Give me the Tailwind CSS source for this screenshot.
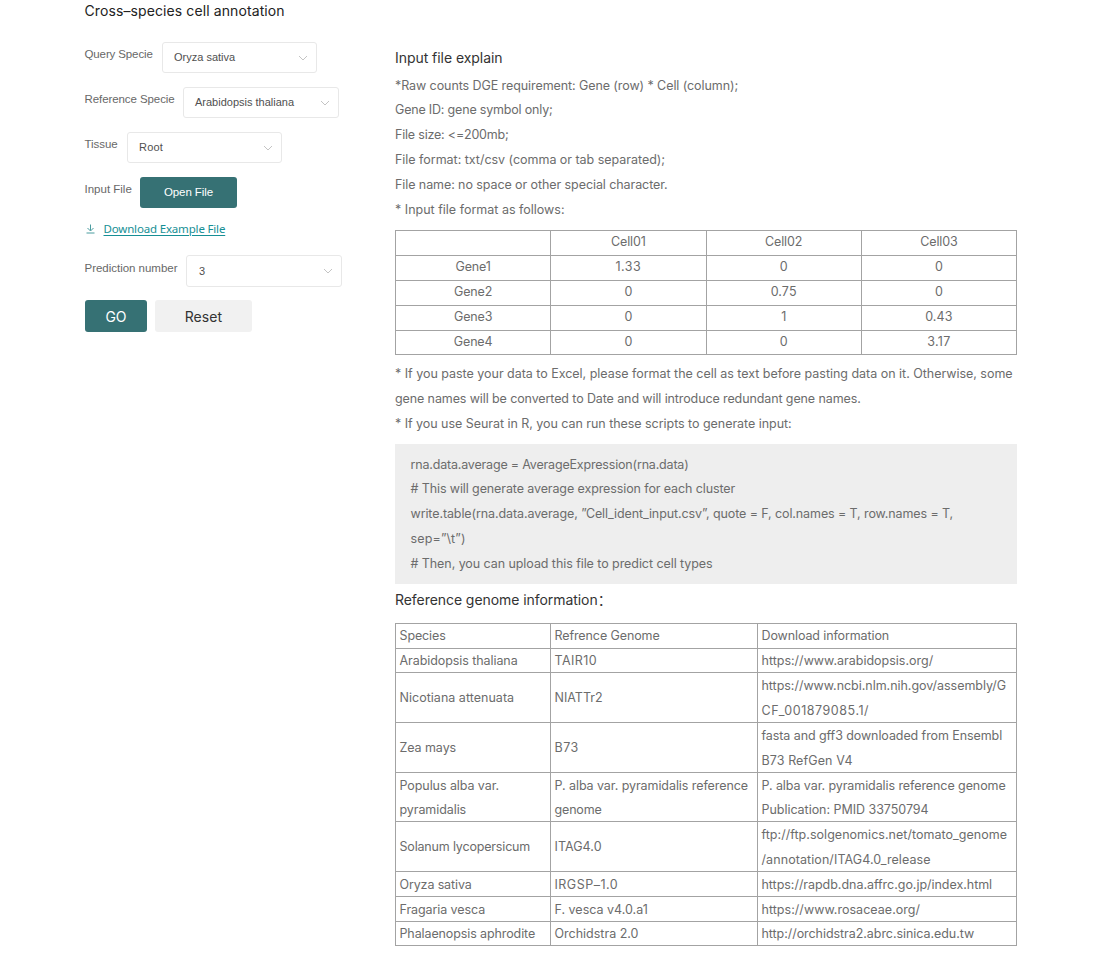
<!DOCTYPE html>
<html lang="en">
<head>
<meta charset="utf-8">
<title>Cross-species cell annotation</title>
<script src="https://cdn.jsdelivr.net/npm/@tailwindcss/browser@4"></script>
</head>
<body class="bg-white font-['Inter','Noto_Sans_CJK_SC',sans-serif] text-[#6c6c6c]">
<main class="flex h-[954px] w-[1100px] overflow-hidden pl-[84.5px] whitespace-nowrap">

  <!-- Query form -->
  <form class="w-[310.5px] shrink-0 pt-px font-['Liberation_Sans',sans-serif] text-[11.5px] text-[#686868]">
    <h1 class="h-[41px] font-['Inter',sans-serif] text-[14px] leading-[20px] tracking-[0.1px] text-[#222]">Cross–species cell annotation</h1>

    <div class="flex h-[45px]">
      <label class="w-[77.5px] leading-[25px] tracking-[-0.12px]">Query Specie</label>
      <div class="flex h-[31px] w-[155px] items-center justify-between rounded-[3px] border border-[#e8e8e8] pr-[8px] pl-[11px] text-[11px] text-[#505050]">
        <span>Oryza sativa</span>
        <svg class="h-[6px] w-[10px]" viewBox="0 0 10 6" fill="none" stroke="#c4c4c4" stroke-width="1"><path d="M1 1l4 4 4-4"/></svg>
      </div>
    </div>

    <div class="flex h-[45px]">
      <label class="w-[98.5px] leading-[25px] tracking-[-0.08px]">Reference Specie</label>
      <div class="flex h-[31px] w-[156px] items-center justify-between rounded-[3px] border border-[#e8e8e8] pr-[8px] pl-[11px] text-[11px] text-[#505050]">
        <span>Arabidopsis thaliana</span>
        <svg class="h-[6px] w-[10px]" viewBox="0 0 10 6" fill="none" stroke="#c4c4c4" stroke-width="1"><path d="M1 1l4 4 4-4"/></svg>
      </div>
    </div>

    <div class="flex h-[45px]">
      <label class="w-[42.5px] leading-[25px] tracking-[-0.05px]">Tissue</label>
      <div class="flex h-[31px] w-[155px] items-center justify-between rounded-[3px] border border-[#e8e8e8] pr-[8px] pl-[11px] text-[11px] text-[#505050]">
        <span class="tracking-[0.2px]">Root</span>
        <svg class="h-[6px] w-[10px]" viewBox="0 0 10 6" fill="none" stroke="#c4c4c4" stroke-width="1"><path d="M1 1l4 4 4-4"/></svg>
      </div>
    </div>

    <div class="flex h-[42px]">
      <label class="w-[55.5px] leading-[25px]">Input File</label>
      <button type="button" class="h-[31px] w-[97px] rounded-[3px] bg-[#367174] text-[11.5px] tracking-[-0.08px] text-white">Open File</button>
    </div>

    <div class="flex h-[36px] items-start">
      <svg class="mt-[5px] ml-[0.5px] h-[10px] w-[11px]" viewBox="0 0 11 10" fill="none" stroke="#4a9c9f" stroke-width="1"><path d="M5.5 0.5v6M2.5 4l3 3 3-3M1.5 9h8"/></svg>
      <a class="ml-[7.5px] font-['Noto_Sans',sans-serif] text-[11.5px] leading-[20px] tracking-[-0.17px] text-[#168f95] underline underline-offset-2">Download Example File</a>
    </div>

    <div class="flex h-[45px]">
      <label class="w-[101.5px] leading-[27px] tracking-[-0.02px]">Prediction number</label>
      <div class="flex h-[32px] w-[156px] items-center justify-between rounded-[3px] border border-[#e8e8e8] pr-[8px] pl-[12px] text-[11px] text-[#505050]">
        <span>3</span>
        <svg class="h-[6px] w-[10px]" viewBox="0 0 10 6" fill="none" stroke="#c4c4c4" stroke-width="1"><path d="M1 1l4 4 4-4"/></svg>
      </div>
    </div>

    <div class="flex gap-[8px] pl-[0.5px] font-['Inter',sans-serif] text-[14px]">
      <button type="button" class="h-[32px] w-[62px] rounded-[3px] bg-[#367174] text-white">GO</button>
      <button type="button" class="h-[32px] w-[97px] rounded-[3px] bg-[#f1f1f1] tracking-[0.1px] text-[#333]">Reset</button>
    </div>
  </form>

  <!-- Help text and reference tables -->
  <section class="w-[622px] shrink-0 text-[12.5px] leading-[24.85px]">
    <h2 class="flex h-[73.5px] items-end pb-[2.5px] text-[14px] tracking-[-0.05px] text-[#333]">Input file explain</h2>
    <div class="h-[156.5px]">
      <p class="tracking-[-0.082px]">*Raw counts DGE requirement: Gene (row) * Cell (column);</p>
      <p class="tracking-[-0.187px]">Gene ID: gene symbol only;</p>
      <p class="tracking-[-0.195px]">File size: &lt;=200mb;</p>
      <p class="tracking-[-0.026px]">File format: txt/csv (comma or tab separated);</p>
      <p class="tracking-[-0.081px]">File name: no space or other special character.</p>
      <p>* Input file format as follows:</p>
    </div>

    <table class="w-[622px] table-fixed border-collapse text-center leading-[22px] tracking-[-0.15px] [&_td]:border [&_td]:border-[#a3a3a3] [&_td]:p-0 [&_td]:pb-[1.5px]">
      <tr class="h-[25px]"><td></td><td>Cell01</td><td>Cell02</td><td>Cell03</td></tr>
      <tr class="h-[25px]"><td>Gene1</td><td class="tracking-[0.5px]">1.33</td><td>0</td><td>0</td></tr>
      <tr class="h-[25px]"><td>Gene2</td><td>0</td><td class="tracking-[0.1px]">0.75</td><td>0</td></tr>
      <tr class="h-[25px]"><td>Gene3</td><td>0</td><td>1</td><td class="tracking-[0.1px]">0.43</td></tr>
      <tr class="h-[24px] leading-[21.5px]"><td>Gene4</td><td>0</td><td>0</td><td class="tracking-[0.3px]">3.17</td></tr>
    </table>

    <div class="h-[89px] pt-[7.4px]">
      <p class="tracking-[-0.023px]">* If you paste your data to Excel, please format the cell as text before pasting data on it. Otherwise, some</p>
      <p class="tracking-[-0.108px]">gene names will be converted to Date and will introduce redundant gene names.</p>
      <p class="tracking-[-0.042px]">* If you use Seurat in R, you can run these scripts to generate input:</p>
    </div>

    <div class="h-[140px] bg-[#eee] pt-[8.6px] pl-[15.5px]">
      <p class="tracking-[-0.183px]">rna.data.average = AverageExpression(rna.data)</p>
      <p class="tracking-[-0.106px]"># This will generate average expression for each cluster</p>
      <p class="tracking-[-0.102px]">write.table(rna.data.average, ”Cell_ident_input.csv”, quote = F, col.names = T, row.names = T,</p>
      <p class="tracking-[0.152px]">sep=”\t”)</p>
      <p class="tracking-[-0.068px]"># Then, you can upload this file to predict cell types</p>
    </div>

    <h2 class="h-[39px] pt-[4px] text-[14px] tracking-[-0.06px] text-[#333]">Reference genome information：</h2>

    <table class="w-[622px] table-fixed border-collapse [&_td]:border [&_td]:border-[#a3a3a3] [&_td]:py-0 [&_td]:pr-0 [&_td]:pl-[3.5px]">
      <colgroup><col class="w-[155px]"><col class="w-[207px]"><col></colgroup>
      <tr class="h-[25px] leading-[23px] [&_p]:-translate-y-px"><td><p class="tracking-[-0.131px]">Species</p></td><td><p class="tracking-[-0.101px]">Refrence Genome</p></td><td><p class="tracking-[-0.109px]">Download information</p></td></tr>
      <tr class="h-[24px] leading-[23px]"><td class="tracking-[-0.072px]">Arabidopsis thaliana</td><td class="tracking-[0.433px]">TAIR10</td><td>https://www.arabidopsis.org/</td></tr>
      <tr class="h-[50px] leading-[24.5px] [&_p]:translate-y-px"><td><p class="tracking-[0.023px]">Nicotiana attenuata</p></td><td><p>NIATTr2</p></td><td><p class="tracking-[-0.03px]">https://www.ncbi.nlm.nih.gov/assembly/G</p><p class="tracking-[0.54px]">CF_001879085.1/</p></td></tr>
      <tr class="h-[50px] leading-[24.5px] [&_p]:translate-y-px"><td><p class="tracking-[-0.077px]">Zea mays</p></td><td><p class="tracking-[0.5px]">B73</p></td><td><p class="tracking-[-0.084px]">fasta and gff3 downloaded from Ensembl</p><p class="tracking-[0.096px]">B73 RefGen V4</p></td></tr>
      <tr class="h-[49px] leading-[24px] [&_p]:translate-y-px"><td><p class="tracking-[-0.075px]">Populus alba var.</p><p class="tracking-[-0.078px]">pyramidalis</p></td><td><p class="tracking-[-0.07px]">P. alba var. pyramidalis reference</p><p class="tracking-[-0.162px]">genome</p></td><td><p class="tracking-[-0.084px]">P. alba var. pyramidalis reference genome</p><p class="tracking-[-0.037px]">Publication: PMID 33750794</p></td></tr>
      <tr class="h-[50px] leading-[24.5px] [&_p]:translate-y-px"><td><p class="tracking-[-0.173px]">Solanum lycopersicum</p></td><td><p class="tracking-[0.056px]">ITAG4.0</p></td><td><p class="tracking-[0.033px]">ftp://ftp.solgenomics.net/tomato_genome</p><p class="tracking-[0.083px]">/annotation/ITAG4.0_release</p></td></tr>
      <tr class="h-[25px] leading-[23px]"><td class="tracking-[-0.128px]">Oryza sativa</td><td class="tracking-[0.485px]">IRGSP–1.0</td><td class="tracking-[-0.035px]">https://rapdb.dna.affrc.go.jp/index.html</td></tr>
      <tr class="h-[25px] leading-[23px]"><td class="tracking-[-0.088px]">Fragaria vesca</td><td>F. vesca v4.0.a1</td><td class="tracking-[0.035px]">https://www.rosaceae.org/</td></tr>
      <tr class="h-[24px] leading-[23px]"><td class="tracking-[-0.109px]">Phalaenopsis aphrodite</td><td>Orchidstra 2.0</td><td class="tracking-[-0.055px]">http://orchidstra2.abrc.sinica.edu.tw</td></tr>
    </table>
  </section>
</main>
</body>
</html>
